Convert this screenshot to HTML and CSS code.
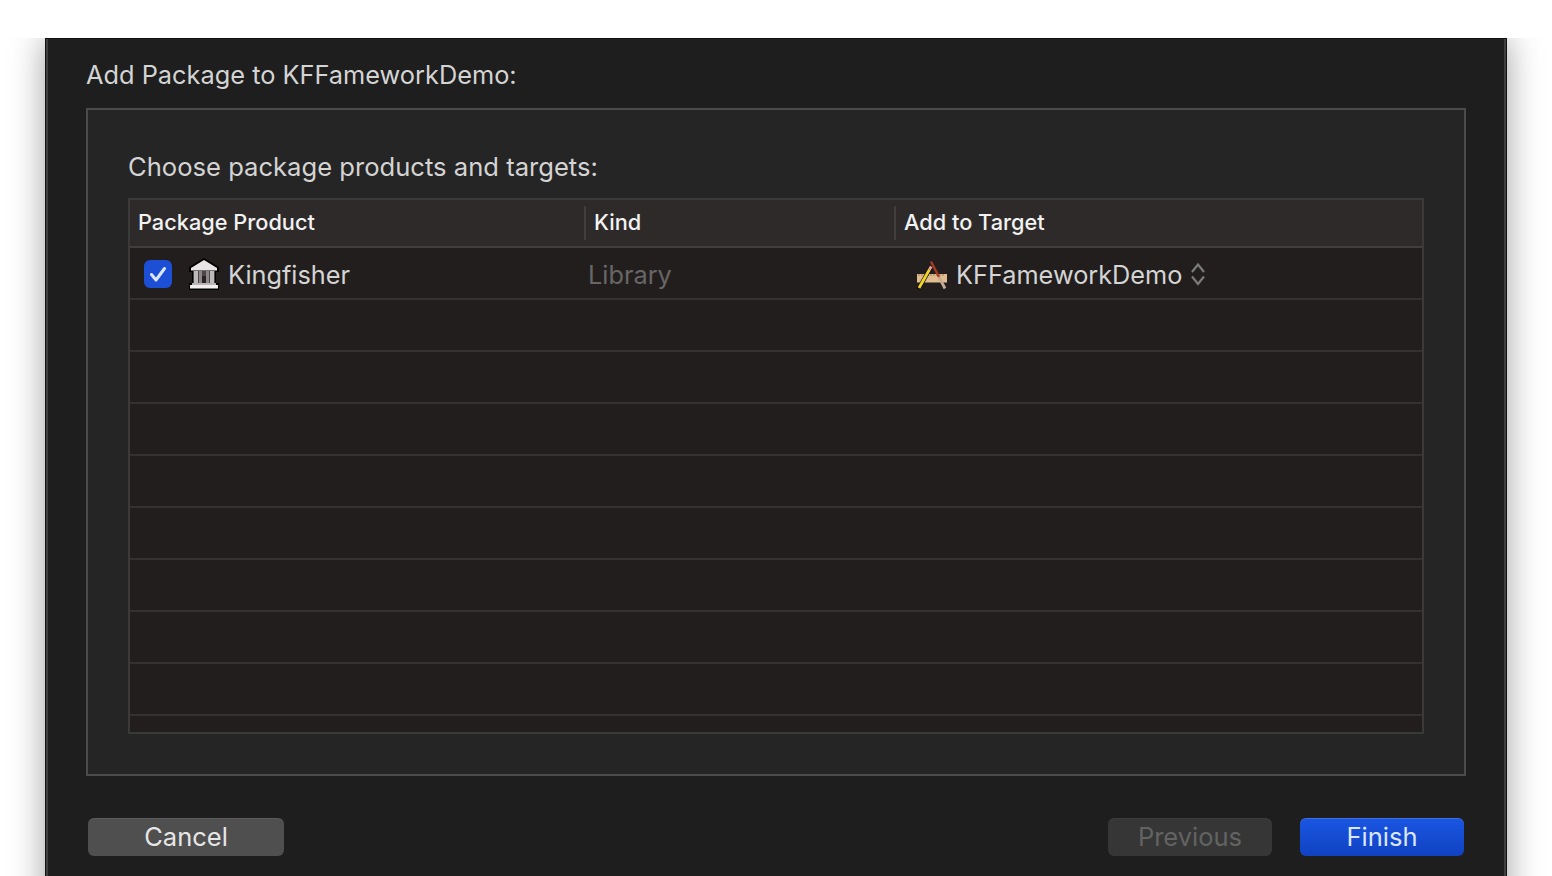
FILE: index.html
```html
<!DOCTYPE html>
<html lang="en">
<head>
<meta charset="utf-8">
<title>Add Package</title>
<link rel="stylesheet" href="styles.css">
</head>
<body>
<div class="top-strip"></div>
<main class="window">
  <h1 class="title">Add Package to KFFameworkDemo:</h1>
  <section class="panel">
    <h2 class="subtitle">Choose package products and targets:</h2>
    <div class="table">
      <div class="head">
        <div class="th th-product">Package Product</div>
        <div class="th th-kind">Kind</div>
        <div class="th th-target">Add to Target</div>
      </div>
      <div class="row row-first">
        <div class="cell cell-product">
          <span class="check">
            <svg viewBox="0 0 28 28" width="28" height="28"><path d="M7.500 14.500l4.500 5.500 8.500-11.500" fill="none" stroke="#dce6fb" stroke-width="3" stroke-linecap="round" stroke-linejoin="round"/></svg>
          </span>
          <svg class="bank" viewBox="0 0 30 32" width="30" height="32">
            <path d="M15 0L0 9v5h3v11H0v7h30v-7h-3V14h3V9z" fill="#000"/>
            <path d="M15 2L2 10v2.500h26V10z" fill="#e9e4e6"/>
            <rect x="4" y="13" width="22" height="12" fill="#4d4848"/>
            <rect x="5" y="13" width="4" height="12" fill="#bdb8ba"/>
            <rect x="10" y="13" width="3" height="12" fill="#8d8789"/>
            <rect x="17" y="13" width="3" height="12" fill="#8d8789"/>
            <rect x="21" y="13" width="4" height="12" fill="#bdb8ba"/>
            <rect x="13" y="18" width="4" height="7" fill="#282424"/>
            <rect x="3" y="25" width="24" height="2" fill="#b9b4b6"/>
            <rect x="1" y="27" width="28" height="3.500" fill="#f1edef"/>
          </svg>
          <span class="name">Kingfisher</span>
        </div>
        <div class="cell cell-kind">Library</div>
        <div class="cell cell-target">
          <svg class="xcode" viewBox="0 0 32 32" width="32" height="32">
            <rect x="1" y="16" width="30" height="8.500" fill="#e0bd8e"/>
            <path d="M3 16v2M6 16v2M9 16v2M12 16v2M15 16v2M18 16v2M21 16v2M24 16v2M27 16v2" stroke="#a07c54" stroke-width="1"/>
            <path d="M2.500 31L15 9" stroke="#0c0c0c" stroke-width="4.200"/>
            <path d="M3 30L13.500 11.500" stroke="#f2d52a" stroke-width="2.800"/>
            <path d="M13.500 11.500l1.700-3" stroke="#eba6a0" stroke-width="2.800"/>
            <path d="M15 3.500L23 19" stroke="#a83a22" stroke-width="2.400"/>
            <path d="M23 19l6 11.500" stroke="#c4ab95" stroke-width="2.800"/>
          </svg>
          <span class="name">KFFameworkDemo</span>
          <svg class="stepper" viewBox="0 0 16 26" width="16" height="26"><path d="M2 11L8 3.500 14 11M2 15.500L8 23l6-7.500" fill="none" stroke="#7b7b7b" stroke-width="2.200"/></svg>
        </div>
      </div>
      <div class="row"></div>
      <div class="row"></div>
      <div class="row"></div>
      <div class="row"></div>
      <div class="row"></div>
      <div class="row"></div>
      <div class="row"></div>
      <div class="row"></div>
      <div class="row-end"></div>
    </div>
  </section>
  <footer class="actions">
    <button class="btn btn-cancel">Cancel</button>
    <div class="actions-right">
      <button class="btn btn-prev">Previous</button>
      <button class="btn btn-finish">Finish</button>
    </div>
  </footer>
</main>
</body>
</html>
```
FILE: styles.css
```css
* { box-sizing: border-box; }
html, body { margin: 0; height: 876px; overflow: hidden; background: #fff; }
body { font-family: Inter, "Liberation Sans", sans-serif; display: flex; flex-direction: column; }
.top-strip { height: 38px; flex: none; background: #fff; position: relative; z-index: 1; }
.window {
  flex: none; height: 880px; margin: 0 45px;
  background: #1e1e1e;
  border: solid #3f3f3f; border-width: 0 3px;
  outline: 1px solid #111; outline-offset: -1px;
  box-shadow: 0 0 32px rgba(0,0,0,.38);
  padding: 0 38px;
}
.title { margin: 0; height: 70px; padding-top: 21px; font-size: 25.350px; line-height: 32px; font-weight: 400; color: #d4d4d4; }
.panel { height: 668px; background: #252525; border: 2px solid #4b4b4b; padding: 0 40px; }
.subtitle { margin: 0; height: 88px; padding-top: 41px; font-size: 25.600px; line-height: 32px; font-weight: 400; color: #d4d4d4; }
.table { height: 536px; border: 2px solid #3a3a3a; background: #221e1d; }
.head { height: 48px; display: flex; background: #2e2a2a; border-bottom: 2px solid #413e3d; color: #f2f2f2; font-size: 21.750px; font-weight: 500; }
.th { height: 44px; line-height: 44px; padding-left: 8px; }
.th-product { width: 454px; }
.th-kind { width: 310px; padding-left: 10px; }
.th-target { padding-left: 10px; }
.th-kind, .th-target { position: relative; }
.th-kind::before, .th-target::before { content: ""; position: absolute; left: 0; top: 6px; height: 34px; width: 2px; background: #413e3d; }
.row { height: 52px; border-bottom: 2px solid #353130; display: flex; align-items: center; font-size: 25.300px; color: #d4d4d4; }
.row-first { padding-top: 2px; }
.row-end { height: 16px; }
.cell { display: flex; align-items: center; }
.cell-product { width: 458px; padding-left: 14px; }
.check { width: 28px; height: 28px; border-radius: 6px; background: #1c4fd6; flex: none; }
.check svg { display: block; }
.bank { margin-left: 17px; margin-right: 9px; flex: none; }
.cell-kind { width: 316px; color: #686666; }
.xcode { margin-left: 12px; margin-right: 8px; flex: none; }
.stepper { margin-left: 8px; }
.actions { display: flex; justify-content: space-between; padding: 42px 2px 0; }
.actions-right { display: flex; gap: 28px; }
.btn { height: 38px; border: 0; border-radius: 6px; font-family: inherit; font-size: 25.500px; line-height: 38px; padding: 0; }
.btn-cancel { width: 196px; background: #4f4f4f; color: #e6e6e6; box-shadow: inset 0 1px rgba(255,255,255,.07); }
.btn-prev { width: 164px; background: #363636; color: #636363; box-shadow: inset 0 1px rgba(255,255,255,.03); }
.btn-finish { width: 164px; background: linear-gradient(#1a56e2, #1042c2); color: #dbe6fc; box-shadow: inset 0 1px rgba(255,255,255,.15); }
```
